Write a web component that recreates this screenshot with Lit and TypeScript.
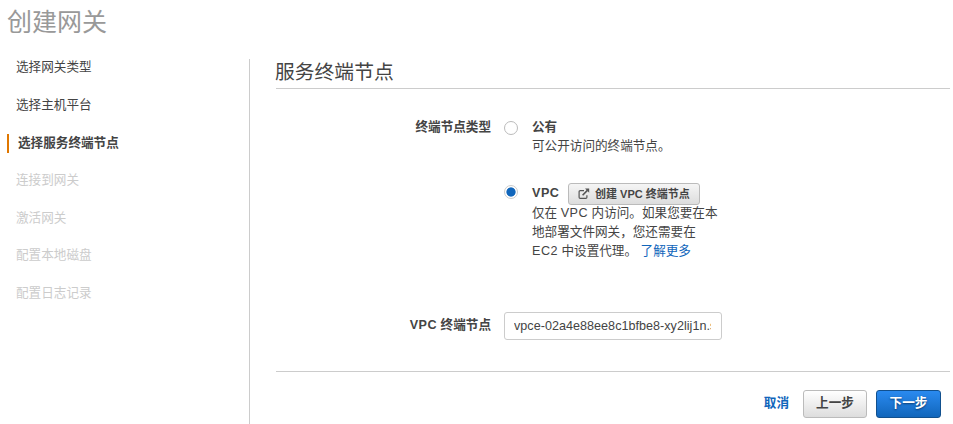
import { LitElement, html, css } from "lit";
import { customElement } from "lit/decorators.js";
import { classMap } from "lit/directives/class-map.js";

const STEPS = [
  { label: "选择网关类型", state: "done" },
  { label: "选择主机平台", state: "done" },
  { label: "选择服务终端节点", state: "active" },
  { label: "连接到网关", state: "todo" },
  { label: "激活网关", state: "todo" },
  { label: "配置本地磁盘", state: "todo" },
  { label: "配置日志记录", state: "todo" },
];

@customElement("app-root")
export class AppRoot extends LitElement {
  static styles = css`
    :host {
      display: block;
      box-sizing: border-box;
      height: 424px;
      overflow: hidden;
      background: #fff;
      color: #444;
      font: 12.6px/19px "Liberation Sans", "Noto Sans CJK SC", sans-serif;
    }
    * { box-sizing: border-box; }
    h1, h2, p { margin: 0; font-weight: 400; }
    h1 { height: 59px; padding: 4px 0 0 7px; font-size: 25px; line-height: 36px; color: #999; }
    .body { display: flex; height: 365px; }
    nav {
      width: 250px;
      flex: none;
      border-right: 1px solid #ccc;
      padding-left: 7px;
      display: flex;
      flex-direction: column;
      gap: 18.7px;
    }
    .step { height: 19px; padding-left: 9px; line-height: 17px; white-space: nowrap; }
    .active { border-left: 2px solid #e07700; font-weight: 700; line-height: 18px; }
    .todo { color: #ccc; }
    main { width: 674px; margin-left: 26px; flex: none; }
    h2 { height: 30px; border-bottom: 1px solid #ccc; font-size: 19.8px; line-height: 27px; text-indent: -1px; }
    .row { display: flex; }
    .label { width: 215px; text-align: right; font-weight: 700; flex: none; }
    .latin { letter-spacing: 0.5px; }
    .type { margin-top: 29px; height: 165px; }
    .choices { margin-left: 13px; }
    .choice { display: flex; height: 65px; }
    .radio {
      width: 14px;
      height: 14px;
      margin: 3px 14px 0 0;
      border: 1px solid #bbb;
      border-radius: 50%;
      flex: none;
    }
    .on { margin-top: 2px; border-color: #ccc; background: radial-gradient(circle, #1166bb 4.2px, #fff 5px); }
    .text { width: 192px; white-space: nowrap; }
    .text strong { display: block; }
    .head { display: flex; align-items: center; height: 22px; margin-top: -1px; gap: 8.5px; }
    button {
      display: flex;
      align-items: center;
      justify-content: center;
      padding: 0 0 1px;
      border: 1px solid #bbb;
      border-radius: 3px;
      background: linear-gradient(#fff, #ddd);
      color: #444;
      font: 700 12.6px/19px "Liberation Sans", "Noto Sans CJK SC", sans-serif;
    }
    .create {
      width: 132px;
      height: 22px;
      margin-top: 2px;
      padding: 0;
      font-size: 11px;
      gap: 5px;
      background: linear-gradient(#f5f5f5, #ddd);
    }
    a { color: #1166bb; text-decoration: none; }
    .endpoint { margin-top: 29px; height: 28px; align-items: center; }
    .endpoint .label { padding-bottom: 1px; }
    input {
      width: 218px;
      height: 28px;
      margin: 0 0 0 13px;
      padding: 0 10px 1px 9px;
      border: 1px solid #ccc;
      border-radius: 3px;
      outline: none;
      background: #fff;
      color: #444;
      font: 12.6px "Liberation Sans", sans-serif;
      letter-spacing: 0.02px;
    }
    footer {
      display: flex;
      align-items: center;
      justify-content: flex-end;
      margin-top: 31px;
      border-top: 1px solid #ccc;
      padding: 18px 9px 0 0;
      font-weight: 700;
    }
    footer a { margin-right: 14px; padding-bottom: 1px; }
    footer button { width: 64px; height: 28px; }
    .next {
      width: 65px;
      margin-left: 9px;
      border-color: #11508e;
      background: linear-gradient(#2a8af0, #1166bb);
      color: #fff;
      text-shadow: 0 1px 2px #0a3c70;
    }
  `;

  render() {
    return html`
      <h1>创建网关</h1>
      <div class="body">
        <nav>
          ${STEPS.map((s) => html`<div class=${classMap({ step: true, [s.state]: true })}>${s.label}</div>`)}
        </nav>
        <main>
          <h2>服务终端节点</h2>
          <div class="row type">
            <div class="label">终端节点类型</div>
            <div class="choices">
              <div class="choice">
                <span class="radio"></span>
                <div class="text"><strong>公有</strong><p>可公开访问的终端节点。</p></div>
              </div>
              <div class="choice">
                <span class="radio on"></span>
                <div class="text">
                  <div class="head">
                    <strong class="latin">VPC</strong>
                    <button class="create">
                      <svg width="12" height="12" viewBox="0 0 12 12" fill="none" stroke="#555" stroke-width="1.2">
                        <path d="M6 2.6H2.2Q1.1 2.6 1.1 3.7V9.3Q1.1 10.4 2.2 10.4H7.8Q8.9 10.4 8.9 9.3V7.2" />
                        <path d="M4.6 7.2L9.4 2.4" stroke-width="1.6" />
                        <path d="M7 .6H11.2V4.8Z" fill="#555" stroke="none" />
                      </svg>
                      <span>创建 VPC 终端节点</span>
                    </button>
                  </div>
                  <p>仅在 <span class="latin">VPC</span> 内访问。如果您要在本<br />地部署文件网关，您还需要在<br /><span class="latin">EC2</span> 中设置代理。 <a>了解更多</a></p>
                </div>
              </div>
            </div>
          </div>
          <div class="row endpoint">
            <div class="label"><span class="latin">VPC</span> 终端节点</div>
            <input .value=${"vpce-02a4e88ee8c1bfbe8-xy2lij1n.s"} />
          </div>
          <footer>
            <a>取消</a>
            <button>上一步</button>
            <button class="next">下一步</button>
          </footer>
        </main>
      </div>
    `;
  }
}
